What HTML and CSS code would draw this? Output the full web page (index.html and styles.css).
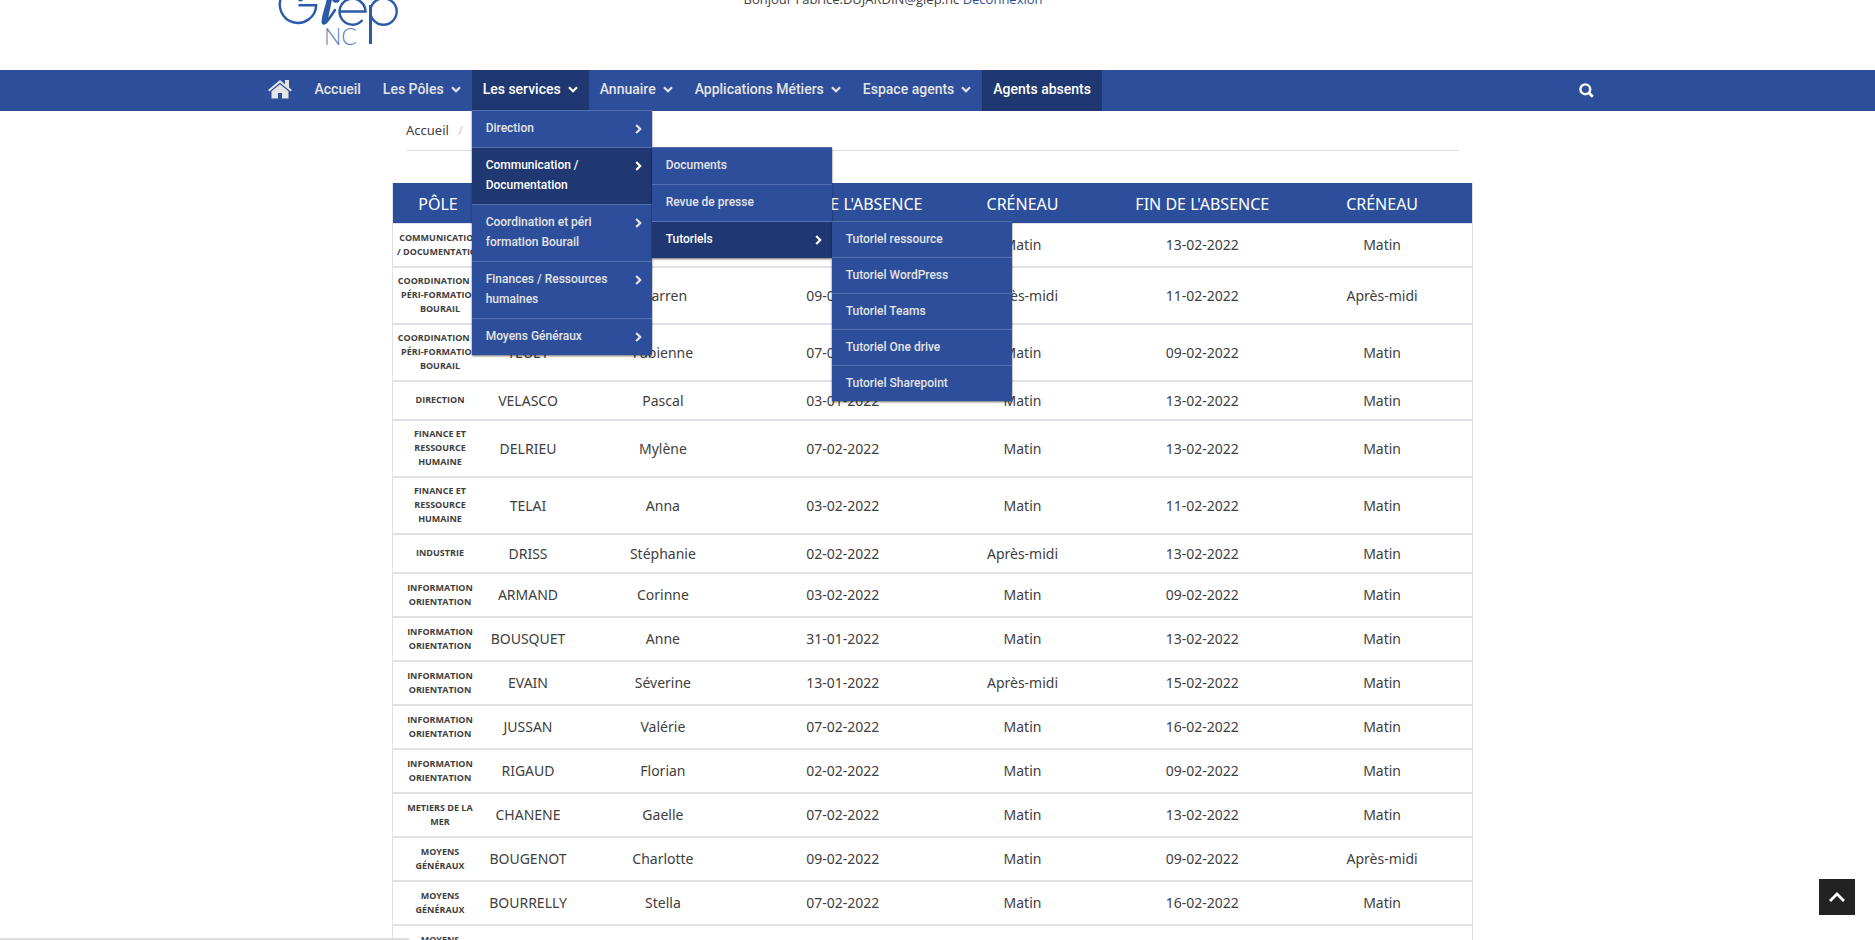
FILE: index.html
```html
<!DOCTYPE html>
<html lang="fr">
<head>
<meta charset="utf-8">
<title>Agents absents - GIEP NC</title>
<link rel="stylesheet" href="styles.css">
</head>
<body>
<svg class="sprite" aria-hidden="true">
  <symbol id="down" viewBox="0 0 10 7"><path d="M1 1.2 5 5.2 9 1.2" fill="none" stroke="currentColor" stroke-width="2.2"/></symbol>
  <symbol id="right" viewBox="0 0 7 10"><path d="M1.2 1 5.2 5 1.2 9" fill="none" stroke="currentColor" stroke-width="2.2"/></symbol>
</svg>
<header class="header">
  <div class="wrap header-inner">
    <a class="logo" href="#" aria-label="GIEP NC">
      <svg width="130" height="50" viewBox="0 0 130 50">
        <g fill="none" stroke="#2a5aa8" stroke-width="2.4">
          <path d="M27.500 5.300H45.200A18.200 18.200 0 1 1 39-9M27.500 0h4"/>
          <path d="M69 11.500H94.500A13 13 0 1 0 91.500 20"/>
          <circle cx="112.500" cy="11.500" r="13.200"/>
          <path d="M99.500 5V44" stroke-width="3"/>
        </g>
        <path d="M58-4C57 3 50 20 52 23c2 2 6-4 12-13" fill="none" stroke="#2a5aa8" stroke-width="2.500" stroke-linecap="round"/>
        <path d="M59-3 54 21" stroke="#2a5aa8" stroke-width="5" stroke-linecap="round"/>
        <circle cx="65" cy="-1" r="3.800" fill="#2a5aa8"/>
        <text class="logo-nc" x="53" y="45">NC</text>
      </svg>
    </a>
    <p class="hello">Bonjour Fabrice.DUJARDIN@giep.nc <a href="#">Déconnexion</a></p>
  </div>
</header>
<nav class="nav" aria-label="Menu principal">
  <div class="wrap nav-inner">
    <a class="home" href="#" aria-label="Page d'accueil"><svg width="24" height="19" viewBox="0 0 24 19"><path fill="currentColor" d="M12 0 0 10l1.300 1.500L12 2.700l10.700 8.800L24 10l-3-2.500V0h-4v4.200zM12 4.200 3.500 11.200V18.500h6.500v-5.500h4v5.500h6.500v-7.300z"/></svg></a>
    <ul class="menu">
      <li><a href="#">Accueil</a></li>
      <li><a href="#">Les Pôles <svg class="down"><use href="#down"/></svg></a></li>
      <li class="on open"><a href="#">Les services <svg class="down"><use href="#down"/></svg></a>
        <ul class="sub">
          <li><a href="#"><span>Direction</span><svg class="right"><use href="#right"/></svg></a></li>
          <li class="on"><a href="#"><span>Communication / Documentation</span><svg class="right"><use href="#right"/></svg></a>
            <ul class="sub side">
              <li><a href="#">Documents</a></li>
              <li><a href="#">Revue de presse</a></li>
              <li class="on"><a href="#"><span>Tutoriels</span><svg class="right"><use href="#right"/></svg></a>
                <ul class="sub side">
                  <li><a href="#">Tutoriel ressource</a></li>
                  <li><a href="#">Tutoriel WordPress</a></li>
                  <li><a href="#">Tutoriel Teams</a></li>
                  <li><a href="#">Tutoriel One drive</a></li>
                  <li><a href="#">Tutoriel Sharepoint</a></li>
                </ul>
              </li>
            </ul>
          </li>
          <li><a href="#"><span>Coordination et péri<br>formation Bourail</span><svg class="right"><use href="#right"/></svg></a></li>
          <li><a href="#"><span>Finances / Ressources<br>humaines</span><svg class="right"><use href="#right"/></svg></a></li>
          <li><a href="#"><span>Moyens Généraux</span><svg class="right"><use href="#right"/></svg></a></li>
        </ul>
      </li>
      <li><a href="#">Annuaire <svg class="down"><use href="#down"/></svg></a></li>
      <li><a href="#">Applications Métiers <svg class="down"><use href="#down"/></svg></a></li>
      <li><a href="#">Espace agents <svg class="down"><use href="#down"/></svg></a></li>
      <li class="on"><a href="#">Agents absents</a></li>
    </ul>
    <button class="search" type="button" aria-label="Rechercher"><svg width="15" height="15" viewBox="0 0 15 15"><circle cx="6.300" cy="6.300" r="4.900" fill="none" stroke="currentColor" stroke-width="2.400"/><path d="m9.800 9.800 4 4" stroke="currentColor" stroke-width="2.800"/></svg></button>
  </div>
</nav>
<main class="main">
  <div class="crumbs"><a href="#">Accueil</a><span>/</span></div>
  <table class="absences">
    <colgroup><col class="narrow"><col class="narrow"><col><col><col><col><col></colgroup>
    <thead><tr><th>PÔLE</th><th>NOM</th><th>PRÉNOM</th><th>DÉBUT DE L'ABSENCE</th><th>CRÉNEAU</th><th>FIN DE L'ABSENCE</th><th>CRÉNEAU</th></tr></thead>
    <tbody>
      <tr class="two"><th>COMMUNICATION<br>/ DOCUMENTATION</th><td></td><td></td><td></td><td>Matin</td><td>13-02-2022</td><td>Matin</td></tr>
      <tr><th>COORDINATION ET<br>PÉRI-FORMATION<br>BOURAIL</th><td></td><td>Warren</td><td>09-02-2022</td><td>Après-midi</td><td>11-02-2022</td><td>Après-midi</td></tr>
      <tr><th>COORDINATION ET<br>PÉRI-FORMATION<br>BOURAIL</th><td>TEUET</td><td>Fabienne</td><td>07-02-2022</td><td>Matin</td><td>09-02-2022</td><td>Matin</td></tr>
      <tr><th>DIRECTION</th><td>VELASCO</td><td>Pascal</td><td>03-01-2022</td><td>Matin</td><td>13-02-2022</td><td>Matin</td></tr>
      <tr><th>FINANCE ET<br>RESSOURCE<br>HUMAINE</th><td>DELRIEU</td><td>Mylène</td><td>07-02-2022</td><td>Matin</td><td>13-02-2022</td><td>Matin</td></tr>
      <tr><th>FINANCE ET<br>RESSOURCE<br>HUMAINE</th><td>TELAI</td><td>Anna</td><td>03-02-2022</td><td>Matin</td><td>11-02-2022</td><td>Matin</td></tr>
      <tr><th>INDUSTRIE</th><td>DRISS</td><td>Stéphanie</td><td>02-02-2022</td><td>Après-midi</td><td>13-02-2022</td><td>Matin</td></tr>
      <tr class="two"><th>INFORMATION<br>ORIENTATION</th><td>ARMAND</td><td>Corinne</td><td>03-02-2022</td><td>Matin</td><td>09-02-2022</td><td>Matin</td></tr>
      <tr class="two"><th>INFORMATION<br>ORIENTATION</th><td>BOUSQUET</td><td>Anne</td><td>31-01-2022</td><td>Matin</td><td>13-02-2022</td><td>Matin</td></tr>
      <tr class="two"><th>INFORMATION<br>ORIENTATION</th><td>EVAIN</td><td>Séverine</td><td>13-01-2022</td><td>Après-midi</td><td>15-02-2022</td><td>Matin</td></tr>
      <tr class="two"><th>INFORMATION<br>ORIENTATION</th><td>JUSSAN</td><td>Valérie</td><td>07-02-2022</td><td>Matin</td><td>16-02-2022</td><td>Matin</td></tr>
      <tr class="two"><th>INFORMATION<br>ORIENTATION</th><td>RIGAUD</td><td>Florian</td><td>02-02-2022</td><td>Matin</td><td>09-02-2022</td><td>Matin</td></tr>
      <tr class="two"><th>METIERS DE LA<br>MER</th><td>CHANENE</td><td>Gaelle</td><td>07-02-2022</td><td>Matin</td><td>13-02-2022</td><td>Matin</td></tr>
      <tr class="two"><th>MOYENS<br>GÉNÉRAUX</th><td>BOUGENOT</td><td>Charlotte</td><td>09-02-2022</td><td>Matin</td><td>09-02-2022</td><td>Après-midi</td></tr>
      <tr class="two"><th>MOYENS<br>GÉNÉRAUX</th><td>BOURRELLY</td><td>Stella</td><td>07-02-2022</td><td>Matin</td><td>16-02-2022</td><td>Matin</td></tr>
      <tr class="two"><th>MOYENS<br>GÉNÉRAUX</th><td></td><td></td><td></td><td></td><td></td><td></td></tr>
    </tbody>
  </table>
</main>
<button class="to-top" type="button" aria-label="Haut de page"><svg width="18" height="12" viewBox="0 0 18 12"><path d="M2 10 9 3l7 7" fill="none" stroke="#fff" stroke-width="2.800"/></svg></button>
<div class="status"></div>
</body>
</html>
```
FILE: styles.css
```css
* { box-sizing: border-box; }

body {
  margin: 0;
  height: 100vh;
  overflow: hidden;
  background: #fff;
  color: #404040;
  font: 14px/20px "Noto Sans", "Open Sans", sans-serif;
}

a { color: inherit; text-decoration: none; }
ul { list-style: none; margin: 0; padding: 0; }
button { border: 0; padding: 0; cursor: pointer; }
svg { display: block; }
.sprite { position: absolute; width: 0; height: 0; }

.wrap {
  max-width: 1360px;
  margin: 0 auto;
  padding-right: 10px;
}

/* Header */
.header { height: 70px; overflow: hidden; }
.header-inner { display: flex; }
.logo { flex: 0 0 486px; padding-left: 13px; }
.logo-nc { font: 300 23px Lato, sans-serif; fill: #5b80bd; }
.hello {
  margin: -11px 0 0;
  font-family: "Open Sans", sans-serif;
  font-size: 13px;
}
.hello a { color: #2d4f9b; }

/* Navigation */
.nav {
  background: #2d4f9b;
  color: #e4e4e4;
  font-family: Roboto, sans-serif;
  font-weight: 500;
}
.nav-inner { display: flex; align-items: center; height: 41px; }
.home { padding: 0 12px 3px 10px; }
.menu { display: flex; height: 100%; }
.menu > li > a {
  display: flex;
  align-items: center;
  gap: 7px;
  height: 100%;
  padding: 0 11px 3px;
  white-space: nowrap;
}
.menu .on { background: #203871; }
.menu .on > a { color: #fff; }
.down { width: 10px; height: 7px; }
.right { flex: none; width: 7px; height: 10px; margin-top: 6px; }
.open, .sub li { position: relative; }

.sub {
  position: absolute;
  z-index: 2;
  top: 40px;
  left: 0;
  width: 180px;
  background: #2d4f9b;
  box-shadow: 0 1px 2px rgba(0, 0, 0, .6);
  font-size: 12px;
}
.sub.side { top: -1px; left: 180px; }
.sub li { border-top: 1px solid #5470ae; }
.sub a {
  display: flex;
  justify-content: space-between;
  padding: 7px 10px 9px 14px;
  color: #e4e4e4;
}
.side .side a { padding-bottom: 8px; }
.search {
  margin-left: auto;
  margin-right: 14px;
  background: none;
  color: #fff;
}

/* Page content */
.main {
  max-width: 1091px;
  margin: 0 auto;
  padding-right: 10px;
}
.crumbs {
  display: flex;
  gap: 9px;
  margin: 0 14px 32px;
  padding: 9px 0 10px;
  border-bottom: 1px solid #ddd;
  font-size: 13px;
}
.crumbs span { color: #ccc; }

.absences {
  width: 100%;
  table-layout: fixed;
  border-collapse: separate;
  border-spacing: 0;
  border: solid #dee2e6;
  border-width: 0 1px;
  text-align: center;
}
.narrow { width: 90px; }
.absences th, .absences td { padding: 0; white-space: nowrap; }
.absences thead th {
  height: 41px;
  padding-top: 2px;
  border-bottom: 1px solid #dee2e6;
  background: #2d4f9b;
  color: #fff;
  font-size: 16px;
  font-weight: 400;
}
.absences tbody tr { height: 39px; }
.absences tbody .two { height: 44px; }
.absences tbody th, .absences tbody td { border-bottom: 2px solid #dee2e6; }
.absences tbody th {
  padding: 6px 0 7px 4px;
  font: 700 9px/14px "Open Sans", sans-serif;
}

.to-top {
  position: fixed;
  right: 20px;
  bottom: 25px;
  display: grid;
  place-items: center;
  width: 36px;
  height: 36px;
  background: #222;
}
.status {
  position: fixed;
  left: 0;
  bottom: 0;
  width: 410px;
  height: 2px;
  background: #dedede;
  border-top-right-radius: 2px;
}
```
